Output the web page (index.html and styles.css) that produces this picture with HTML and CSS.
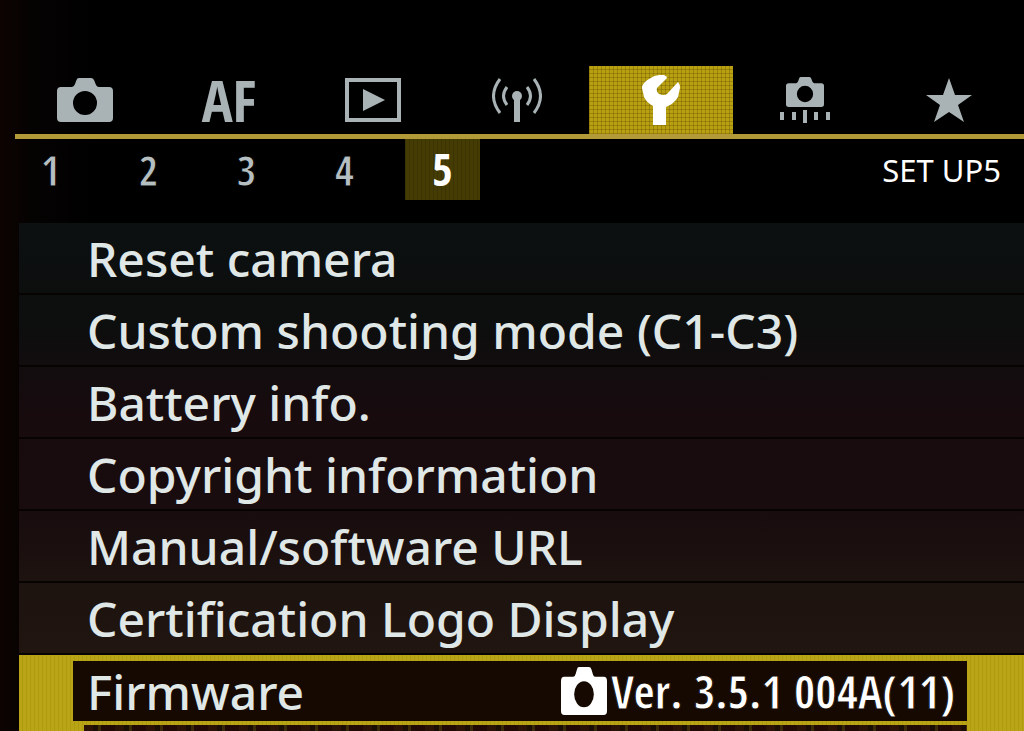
FILE: index.html
```html
<!DOCTYPE html>
<html lang="en">
<head>
<meta charset="utf-8">
<meta name="viewport" content="width=device-width, initial-scale=1">
<title>SET UP5</title>
<link rel="stylesheet" href="styles.css">
</head>
<body>
<svg class="defs" aria-hidden="true">
  <symbol id="camera" viewBox="0 0 56 44" preserveAspectRatio="none">
    <path fill-rule="evenodd" d="M4 9h11q2 0 3-3l1.500-4Q20 0 22 0h12q2 0 3 2l2 5q1 2 3 2h10q4 0 4 4v27q0 4-4 4H4q-4 0-4-4V13q0-4 4-4zM28 13a12 12 0 1 0 0 24 12 12 0 0 0 0-24z"/>
  </symbol>
</svg>
<header class="top">
  <nav class="tabs" aria-label="Menu groups">
    <button class="tab" aria-label="Shooting"><svg class="icon" width="56" height="44"><use href="#camera"/></svg></button>
    <button class="tab tab-text">AF</button>
    <button class="tab" aria-label="Playback"><svg class="icon" width="56" height="44" viewBox="0 0 56 44"><path class="line thick" d="M2 2h52v40H2z"/><path d="M18 11l22 11-22 11z"/></svg></button>
    <button class="tab" aria-label="Wireless"><svg class="icon" width="50" height="44" viewBox="0 0 50 44"><circle cx="25" cy="18" r="5"/><path d="M22 20h6v24h-6z"/><path class="line" d="M15 9q-7 9 0 18M35 9q7 9 0 18M8 1q-13 17 0 34M42 1q13 17 0 34"/></svg></button>
    <button class="tab tab-active" aria-label="Set up" aria-current="page"><svg class="icon" width="38" height="50" viewBox="0 0 38 50"><path d="M22 0q-8-1-15 4Q0 8 0 13l2 9q3 6 9 9v19h13V32q8-3 12-10l2-9q0-4-2-6l-11 12q-3 2-8 0-3-2-2-6L25 3q0-2-3-3z"/></svg></button>
    <button class="tab" aria-label="Custom functions"><svg class="icon" width="50" height="46" viewBox="0 0 50 46"><use href="#camera" x="6" y="0" width="38" height="30"/><path d="M0 35h4v8H0zM12 35h4v8h-4zM23 33h4v13h-4zM34 35h4v8h-4zM46 35h4v8h-4z"/></svg></button>
    <button class="tab" aria-label="My Menu"><svg class="icon" width="46" height="44" viewBox="0 0 46 44"><path d="M23 0l6 17h17L32 27l6 17-15-10L8 44l6-17L0 17h17z"/></svg></button>
  </nav>
  <div class="rule"></div>
  <div class="subbar">
    <nav class="pages" aria-label="Pages">
      <button class="page">1</button>
      <button class="page">2</button>
      <button class="page">3</button>
      <button class="page">4</button>
      <button class="page page-active" aria-current="page">5</button>
    </nav>
    <h1 class="title">SET UP5</h1>
  </div>
</header>
<main class="menu">
  <button class="row">Reset camera</button>
  <button class="row">Custom shooting mode (C1-C3)</button>
  <button class="row">Battery info.</button>
  <button class="row">Copyright information</button>
  <button class="row">Manual/software URL</button>
  <button class="row">Certification Logo Display</button>
  <button class="selected">
    <span class="selected-body">
      <span>Firmware</span>
      <span class="version"><svg class="icon-light" width="46" height="48"><use href="#camera"/></svg>Ver. 3.5.1 004A(11)</span>
    </span>
    <span class="edge"></span>
  </button>
</main>
</body>
</html>
```
FILE: styles.css
```css
* { box-sizing: border-box; }
body {
  margin: 0;
  min-height: 100vh;
  overflow: hidden;
  background: linear-gradient(90deg, #0d0401 0, #050202 30px, #000 100px);
  color: #e0e8e7;
  font-family: "Noto Sans", "Open Sans", sans-serif;
  font-weight: 500;
}
button {
  margin: 0;
  padding: 0;
  border: 0;
  background: none;
  color: inherit;
  font: inherit;
  text-align: left;
  cursor: pointer;
}
.defs { position: absolute; width: 0; height: 0; }
.top { padding-top: 66px; }
.tabs {
  display: grid;
  grid-template-columns: repeat(7, 1fr);
  height: 68px;
  padding: 0 3px 0 13px;
}
.tab {
  display: flex;
  align-items: center;
  justify-content: center;
  color: #a9b3b5;
}
.tab-text {
  font-family: "Open Sans Condensed", "Noto Sans", sans-serif;
  font-size: 58px;
  font-weight: 700;
  line-height: 68px;
}
.tab-active {
  color: #fff;
  background:
    repeating-linear-gradient(90deg, rgba(70, 50, 0, .25) 0 1px, transparent 1px 4px),
    repeating-linear-gradient(0deg, rgba(70, 50, 0, .25) 0 1px, transparent 1px 4px),
    #b8a010;
}
.icon, .icon-light { display: block; fill: currentColor; }
.line { fill: none; stroke: currentColor; stroke-width: 3; }
.thick { stroke-width: 4; }
.rule { height: 5px; margin-left: 15px; background: #b39a38; }
.subbar {
  display: flex;
  justify-content: space-between;
  align-items: center;
  padding: 0 23px 0 13px;
}
.pages { display: flex; gap: 23px; }
.page {
  width: 75px;
  height: 61px;
  color: #b5bfc1;
  font-family: "Open Sans Condensed", "Noto Sans", sans-serif;
  font-size: 42px;
  font-weight: 700;
  line-height: 61px;
  -webkit-text-stroke: 1px #000;
  text-align: center;
}
.page-active {
  color: #fff;
  font-size: 44px;
  -webkit-text-stroke: 0;
  background:
    repeating-linear-gradient(90deg, rgba(0, 0, 0, .15) 0 1px, transparent 1px 4px),
    #453c04;
}
.title {
  margin: 0;
  color: #fff;
  font-size: 31px;
  font-weight: 400;
}
.menu {
  display: flex;
  flex-direction: column;
  margin: 23px 0 0 19px;
  font-size: 48px;
  background: linear-gradient(#0c1010 0, #0d0e0e 100px, #170b0e 190px, #180c0e 290px, #1d130f 360px, #20150f 431px);
}
.row {
  height: 72px;
  padding-left: 68px;
  border-bottom: 2px solid #070303;
  line-height: 72px;
}
.selected {
  padding: 6px 57px 0 54px;
  background: repeating-linear-gradient(90deg, #b8a414 0 3px, #af9b11 3px 4px);
}
.selected-body {
  display: flex;
  align-items: center;
  justify-content: space-between;
  height: 60px;
  padding: 0 12px 0 14px;
  background: #150902;
}
.version {
  display: flex;
  align-items: center;
  gap: 4px;
  color: #fff;
  font-family: "Open Sans Condensed", "Noto Sans", sans-serif;
  font-size: 46px;
  font-weight: 700;
  line-height: 60px;
  -webkit-text-stroke: 1px #150902;
}
.edge {
  display: block;
  height: 7px;
  margin: 4px 0 0 11px;
  background: repeating-linear-gradient(90deg, #2a1306 0 9px, #1a0d04 9px 14px, #3a2a08 14px 17px, #210a05 17px 31px);
}
```
